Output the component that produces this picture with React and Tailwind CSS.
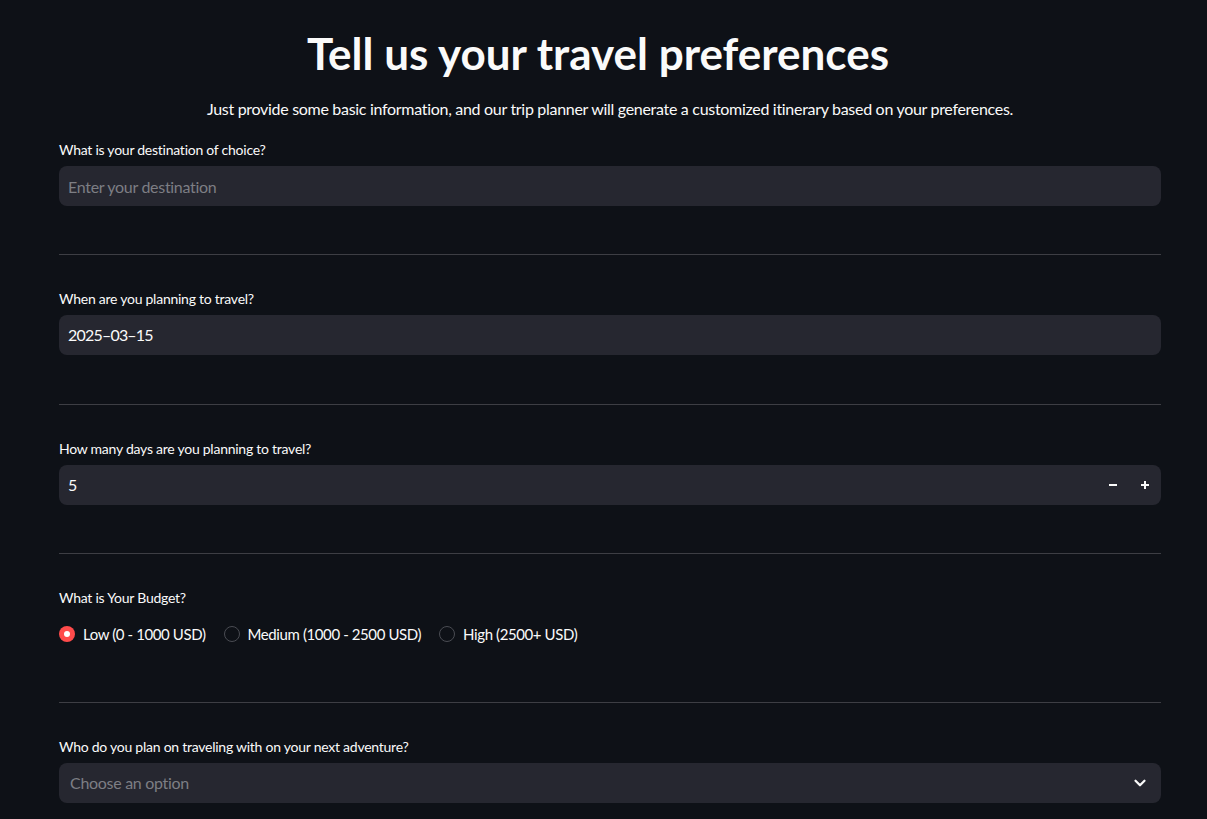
import React, { useState } from 'react';
import { ChevronDown } from 'lucide-react';

const font = { fontFamily: 'Lato, "Noto Sans", sans-serif' };

function Label({ children }) {
  return <div className="h-[20px] text-[14px] leading-[20px] tracking-[-0.25px] text-[#fafafa]">{children}</div>;
}

function Divider({ wide }) {
  return <div className={wide ? 'mt-[49px] mb-[34px] h-px bg-[#3d3e44]' : 'mt-[48px] mb-[34px] h-px bg-[#3d3e44]'} />;
}

function Radio({ checked, label, onClick }) {
  return (
    <button type="button" onClick={onClick} className="flex items-center gap-[8px]">
      {checked ? (
        <span className="flex h-[16px] w-[16px] items-center justify-center rounded-full bg-[#ff4b4b]">
          <span className="h-[6px] w-[6px] rounded-full bg-white" />
        </span>
      ) : (
        <span className="h-[16px] w-[16px] rounded-full border border-[#4a4c53] bg-[#0e1117]" />
      )}
      <span className="text-[15px] tracking-[-0.4px] text-[#fafafa]">{label}</span>
    </button>
  );
}

export default function App() {
  const [days, setDays] = useState(5);
  const [budget, setBudget] = useState('low');

  return (
    <div className="min-h-screen bg-[#0e1117] text-[#fafafa]" style={font}>
      <div className="ml-[59px] w-[1102px] pt-[24px]">
        <h1 className="pr-[24px] text-center text-[44px] font-bold leading-[58px]">
          Tell us your travel preferences
        </h1>
        <p className="mt-[15px] text-center text-[16px] leading-[24px] tracking-[-0.3px]">
          Just provide some basic information, and our trip planner will generate a customized itinerary based on your preferences.
        </p>

        <div className="mt-[19px]">
          <Label>What is your destination of choice?</Label>
          <input
            className="mt-[6px] h-[40px] w-full rounded-[8px] bg-[#262730] px-[9px] text-[16px] tracking-[-0.3px] text-[#fafafa] outline-none placeholder:text-[#7d7e84]"
            placeholder="Enter your destination"
          />
        </div>
        <Divider />

        <div>
          <Label>When are you planning to travel?</Label>
          <div className="mt-[6px] flex h-[40px] items-center rounded-[8px] bg-[#262730] px-[9px] text-[16px] tracking-[-0.8px]">
            2025–03–15
          </div>
        </div>
        <Divider wide />

        <div>
          <Label>How many days are you planning to travel?</Label>
          <div className="mt-[6px] flex h-[40px] items-center rounded-[8px] bg-[#262730] pl-[9px] text-[16px]">
            <span className="flex-1">{days}</span>
            <button type="button" onClick={() => setDays(Math.max(1, days - 1))} className="flex h-[40px] w-[32px] items-center justify-center">
              <svg width="8" height="8" viewBox="0 0 8 8"><line x1="0" y1="4" x2="8" y2="4" stroke="#fafafa" strokeWidth="2" /></svg>
            </button>
            <button type="button" onClick={() => setDays(days + 1)} className="flex h-[40px] w-[32px] items-center justify-center">
              <svg width="8" height="8" viewBox="0 0 8 8"><line x1="0" y1="4" x2="8" y2="4" stroke="#fafafa" strokeWidth="2" /><line x1="4" y1="0" x2="4" y2="8" stroke="#fafafa" strokeWidth="2" /></svg>
            </button>
          </div>
        </div>
        <Divider />

        <div>
          <Label>What is Your Budget?</Label>
          <div className="mt-[6px] flex h-[40px] items-center gap-[18px]">
            <Radio checked={budget === 'low'} onClick={() => setBudget('low')} label="Low (0 - 1000 USD)" />
            <Radio checked={budget === 'medium'} onClick={() => setBudget('medium')} label="Medium (1000 - 2500 USD)" />
            <Radio checked={budget === 'high'} onClick={() => setBudget('high')} label="High (2500+ USD)" />
          </div>
        </div>
        <Divider />

        <div>
          <Label>Who do you plan on traveling with on your next adventure?</Label>
          <div className="mt-[6px] flex h-[40px] items-center rounded-[8px] bg-[#262730] pl-[11px] pr-[12px] text-[16px] tracking-[-0.3px] text-[#7d7e84]">
            <span className="flex-1">Choose an option</span>
            <ChevronDown size={18} strokeWidth={3} color="#fafafa" />
          </div>
        </div>
      </div>
    </div>
  );
}
